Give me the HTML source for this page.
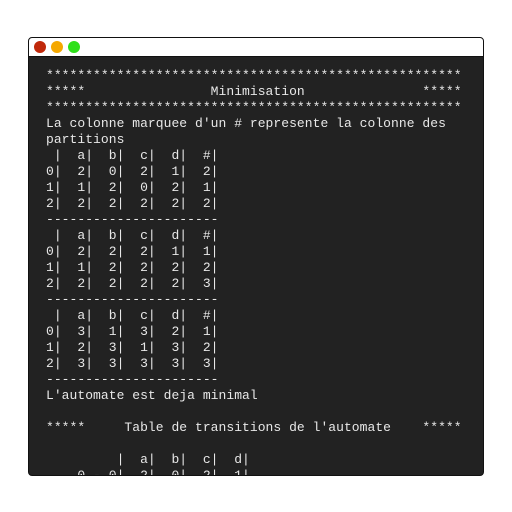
<!DOCTYPE html>
<html><head><style>
html,body{margin:0;padding:0;background:#fff;width:512px;height:512px;overflow:hidden}
.win{position:absolute;left:28px;top:37px;width:454px;height:437px;border:1px solid #111;border-radius:4px;overflow:hidden;background:#222}
.tb{height:18px;background:#fff;border-bottom:1px solid #111;position:relative}
.d{position:absolute;top:3px;width:12px;height:12px;border-radius:50%}
pre{margin:0;position:absolute;left:17px;top:30px;font-family:"Liberation Mono","DejaVu Sans Mono",monospace;font-size:13px;line-height:16px;color:#e8e8e8;letter-spacing:0.04px}
</style></head><body>
<div class="win">
<div class="tb"><div class="d" style="left:5px;background:#c0280a"></div><div class="d" style="left:22px;background:#f5a800"></div><div class="d" style="left:39px;background:#2ee01a"></div></div>
<pre>*****************************************************
*****                Minimisation               *****
*****************************************************
La colonne marquee d'un # represente la colonne des
partitions
 |  a|  b|  c|  d|  #|
0|  2|  0|  2|  1|  2|
1|  1|  2|  0|  2|  1|
2|  2|  2|  2|  2|  2|
----------------------
 |  a|  b|  c|  d|  #|
0|  2|  2|  2|  1|  1|
1|  1|  2|  2|  2|  2|
2|  2|  2|  2|  2|  3|
----------------------
 |  a|  b|  c|  d|  #|
0|  3|  1|  3|  2|  1|
1|  2|  3|  1|  3|  2|
2|  3|  3|  3|  3|  3|
----------------------
L'automate est deja minimal

*****     Table de transitions de l'automate    *****

         |  a|  b|  c|  d|
    0 - 0|  2|  0|  2|  1|
</pre>
</div>
</body></html>
